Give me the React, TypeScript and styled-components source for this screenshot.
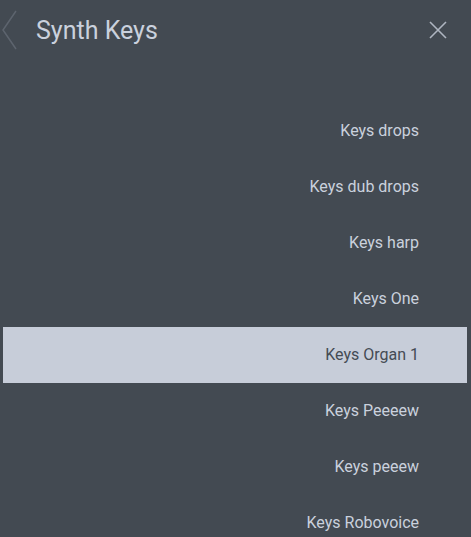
import React from 'react';
import styled, { createGlobalStyle } from 'styled-components';

const GlobalStyle = createGlobalStyle`
  html, body {
    margin: 0;
    padding: 0;
    background: #434a52;
    font-family: Roboto, "Noto Sans", "Liberation Sans", sans-serif;
  }
`;

const Panel = styled.div`
  width: 471px;
  height: 537px;
  overflow: hidden;
  background: #434a52;
`;

const Header = styled.div`
  height: 60px;
  display: flex;
  align-items: center;
  padding: 0 24px 0 2px;
`;

const BackButton = styled.button`
  background: none;
  border: 0;
  padding: 0;
  width: 16px;
  height: 40px;
  display: flex;
  color: #5d646e;
  cursor: pointer;
`;

const Title = styled.h1`
  flex: 1;
  margin: 0 0 0 18px;
  font-size: 25px;
  font-weight: 400;
  color: #cad1dd;
`;

const CloseButton = styled.button`
  background: none;
  border: 0;
  padding: 0;
  width: 18px;
  height: 18px;
  display: flex;
  color: #aeb5c0;
  cursor: pointer;
`;

const List = styled.ul`
  list-style: none;
  margin: 43px 4px 0 3px;
  padding: 0;
`;

const Item = styled.li<{ $active?: boolean }>`
  height: 56px;
  display: flex;
  align-items: center;
  justify-content: flex-end;
  padding-right: 48px;
  padding-bottom: 2px;
  box-sizing: border-box;
  font-size: 16px;
  font-weight: 400;
  background: ${(p) => (p.$active ? '#c7cdd9' : 'transparent')};
  color: ${(p) => (p.$active ? '#444b54' : '#cad1dd')};
`;

const presets = [
  'Keys drops',
  'Keys dub drops',
  'Keys harp',
  'Keys One',
  'Keys Organ 1',
  'Keys Peeeew',
  'Keys peeew',
  'Keys Robovoice',
];

export default function App() {
  return (
    <Panel>
      <GlobalStyle />
      <Header>
        <BackButton aria-label="Back">
          <svg width="16" height="40" viewBox="0 0 16 40">
            <path d="M14 1 L1 20 L14 39" fill="none" stroke="currentColor" strokeWidth="1.5" />
          </svg>
        </BackButton>
        <Title>Synth Keys</Title>
        <CloseButton aria-label="Close">
          <svg width="18" height="18" viewBox="0 0 18 18">
            <path d="M1 1 L17 17 M17 1 L1 17" stroke="currentColor" strokeWidth="1.6" />
          </svg>
        </CloseButton>
      </Header>
      <List>
        {presets.map((name) => (
          <Item key={name} $active={name === 'Keys Organ 1'}>
            {name}
          </Item>
        ))}
      </List>
    </Panel>
  );
}
